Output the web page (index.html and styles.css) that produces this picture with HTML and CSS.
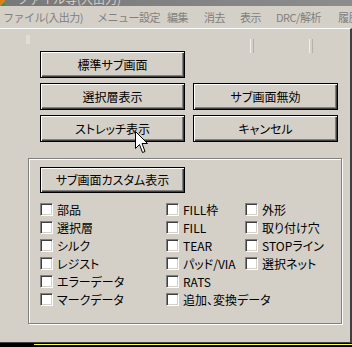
FILE: index.html
```html
<!DOCTYPE html>
<html lang="ja">
<head>
<meta charset="utf-8">
<title>サブ画面</title>
<link rel="stylesheet" href="styles.css">
</head>
<body>
<div class="screen">
  <div class="titlebar">
    <span class="ticon"></span>
    <span class="ttext">ファイル等(入出力)</span>
  </div>
  <div class="menubar">
    <span class="mi m1">ファイル(入出力)</span>
    <span class="mi m2">メニュー設定</span>
    <span class="mi m3">編集</span>
    <span class="mi m4">消去</span>
    <span class="mi m5">表示</span>
    <span class="mi m6">DRC/解析</span>
    <span class="mi m7">履歴</span>
  </div>
  <div class="dialog">
    <span class="mark mark-a"></span>
    <span class="mark mark-b"></span>
    <span class="mark mark-c"></span>
    <div class="btn-grid">
      <button class="btn">標準サブ画面</button>
      <span class="empty"></span>
      <button class="btn">選択層表示</button>
      <button class="btn">サブ画面無効</button>
      <button class="btn">ストレッチ表示</button>
      <button class="btn">キャンセル</button>
    </div>
    <div class="group">
      <button class="btn">サブ画面カスタム表示</button>
      <div class="checks">
        <label class="chk"><span class="box"></span>部品</label>
        <label class="chk"><span class="box"></span>FILL枠</label>
        <label class="chk"><span class="box"></span>外形</label>
        <label class="chk"><span class="box"></span>選択層</label>
        <label class="chk"><span class="box"></span>FILL</label>
        <label class="chk"><span class="box"></span>取り付け穴</label>
        <label class="chk"><span class="box"></span>シルク</label>
        <label class="chk"><span class="box"></span>TEAR</label>
        <label class="chk"><span class="box"></span>STOPライン</label>
        <label class="chk"><span class="box"></span>レジスト</label>
        <label class="chk"><span class="box"></span>パッド/VIA</label>
        <label class="chk"><span class="box"></span>選択ネット</label>
        <label class="chk"><span class="box"></span>エラーデータ</label>
        <label class="chk"><span class="box"></span>RATS</label>
        <span class="empty"></span>
        <label class="chk"><span class="box"></span>マークデータ</label>
        <label class="chk"><span class="box"></span>追加、変換データ</label>
        <span class="empty"></span>
      </div>
    </div>
  </div>
  <div class="strip"><span class="yline"></span></div>
  <svg class="cursor" width="14" height="23" viewBox="0 0 14 23">
    <path d="M0.5 0.5 L0.5 17.5 L4.5 13.5 L7.5 21.5 L10 20.5 L7 12.5 L12.5 12.5 Z" fill="#fff" stroke="#000" stroke-width="1"/>
  </svg>
</div>
</body>
</html>
```

FILE: styles.css
```css
* { box-sizing: border-box; }
html, body {
  margin: 0;
  padding: 0;
  background: #d4d0c8;
}
.screen {
  position: relative;
  width: 352px;
  height: 347px;
  overflow: hidden;
  font-family: "Noto Sans CJK JP", "Noto Sans", sans-serif;
  font-size: 12px;
  font-feature-settings: "palt";
  color: #000;
}
.titlebar {
  height: 6px;
  overflow: hidden;
  display: flex;
  align-items: flex-start;
  background: linear-gradient(90deg, #787878, #8c8c8c);
}
.ticon {
  width: 5px;
  height: 6px;
  background: linear-gradient(135deg, #e07a20 60%, #3a9a3a 60%);
  flex: none;
}
.ttext {
  margin-left: 12px;
  margin-top: -7px;
  font-size: 12px;
  line-height: 12px;
  font-feature-settings: normal;
  color: #d4d0c8;
  white-space: nowrap;
}
.menubar {
  height: 22px;
  display: flex;
  align-items: center;
  padding-left: 3px;
  color: #808080;
  white-space: nowrap;
  line-height: 22px;
  font-size: 11px;
  font-feature-settings: normal;
  letter-spacing: -0.5px;
}
.mi { flex: none; }
.m1 { width: 94px; }
.m2 { width: 70px; }
.m3 { width: 37px; }
.m4 { width: 36px; }
.m5 { width: 36px; }
.m6 { width: 62px; }
.dialog {
  position: relative;
  height: 315px;
  border-top: 1px solid #fff;
  border-right: 2px solid #404040;
  border-bottom: 1px solid #404040;
  padding: 22px 0 0 40px;
}
.mark {
  position: absolute;
  display: block;
}
.mark-a {
  left: 26px;
  top: 6px;
  width: 4px;
  height: 9px;
  background: #e4dad6;
}
.mark-b, .mark-c {
  top: 10px;
  width: 4px;
  height: 14px;
  border-left: 1px solid #f0f0f0;
  border-right: 1px solid #b8b0a8;
}
.mark-b { left: 250px; }
.mark-c { left: 309px; }
.btn-grid {
  display: grid;
  grid-template-columns: 145px 145px;
  grid-auto-rows: 27px;
  column-gap: 8px;
  row-gap: 5px;
}
.btn {
  font: inherit;
  font-feature-settings: "palt";
  color: #000;
  background: #d4d0c8;
  margin: 0;
  padding: 0;
  width: 145px;
  height: 27px;
  border: 1px solid #000;
  box-shadow: inset 1px 1px 0 #fff, inset -1px -1px 0 #404040, inset -2px -2px 0 #808080;
  line-height: 24px;
  text-align: center;
}
.group {
  margin: 16px 0 0 -12px;
  width: 314px;
  height: 166px;
  border: 1px solid #808080;
  box-shadow: inset 1px 1px 0 #fff, 1px 1px 0 #fff;
  padding: 8px 0 0 11px;
}
.group .btn { height: 26px; }
.checks {
  margin-top: 10px;
  display: grid;
  grid-template-columns: 126px 79px 80px;
  grid-auto-rows: 18px;
}
.chk {
  display: flex;
  align-items: center;
  height: 13px;
  white-space: nowrap;
  line-height: 13px;
}
.box {
  flex: none;
  width: 13px;
  height: 13px;
  margin-right: 4px;
  background: #fff;
  border-top: 1px solid #808080;
  border-left: 1px solid #808080;
  border-right: 1px solid #fff;
  border-bottom: 1px solid #fff;
  box-shadow: inset 1px 1px 0 #404040, inset -1px -1px 0 #d4d0c8;
}
.strip {
  height: 4px;
  background: #000;
  padding-top: 1px;
}
.yline {
  display: block;
  height: 1px;
  margin-left: 34px;
  background: #ffff40;
}
.cursor {
  position: absolute;
  left: 135px;
  top: 131px;
}
```
